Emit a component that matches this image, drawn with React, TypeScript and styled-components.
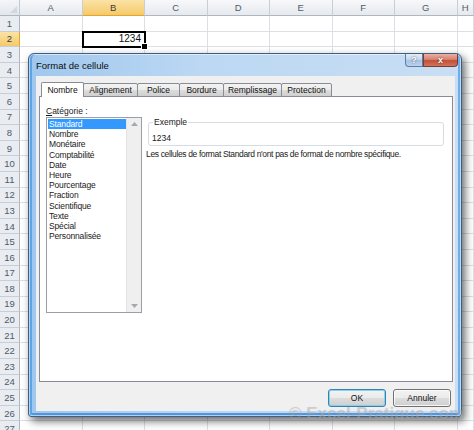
import React from "react";
import styled, { createGlobalStyle, css } from "styled-components";

const GlobalStyle = createGlobalStyle`
  html, body { margin: 0; padding: 0; background: #fff; overflow: hidden; }
  body { font-family: "Liberation Sans", Arial, sans-serif; }
  * { box-sizing: border-box; }
`;

const Stage = styled.div`
  position: relative;
  width: 474px;
  height: 430px;
  overflow: hidden;
  background: #fff;
`;

/* ---------- spreadsheet ---------- */
const Sheet = styled.div`
  display: grid;
  grid-template-columns: 20px repeat(7, 62.5px) 1fr;
  grid-template-rows: 16px repeat(27, 15.6px);
  width: 474px;
  font-family: "Liberation Sans", Arial, sans-serif;
`;

const Corner = styled.div`
  background: linear-gradient(#f4f6f9, #e2e6ec);
  border-right: 1px solid #c2c9d3;
  border-bottom: 1px solid #aeb6c2;
  position: relative;
  &::after {
    content: "";
    position: absolute;
    right: 2px;
    bottom: 2px;
    border-style: solid;
    border-width: 0 0 7px 7px;
    border-color: transparent transparent #d3d8df transparent;
  }
`;

const ColHeader = styled.div<{ $active?: boolean }>`
  display: flex;
  align-items: center;
  justify-content: center;
  font-size: 9.5px;
  color: #505a68;
  border-right: 1px solid #c8ced7;
  border-bottom: 1px solid #aeb6c2;
  background: linear-gradient(#f7f8fa, #e6e9ee);
  ${(p) =>
    p.$active &&
    css`
      background: linear-gradient(#fbe3a6, #f5c969);
      border-bottom: 1px solid #e0a630;
      color: #3b3b3b;
    `}
`;

const RowHeader = styled.div<{ $active?: boolean }>`
  display: flex;
  align-items: center;
  justify-content: center;
  font-size: 9.5px;
  color: #505a68;
  border-right: 1px solid #aeb6c2;
  border-bottom: 1px solid #c8ced7;
  background: #e9ecf1;
  ${(p) =>
    p.$active &&
    css`
      background: linear-gradient(#fbe3a6, #f5c969);
      border-right: 1px solid #e0a630;
      color: #3b3b3b;
    `}
`;

const Cell = styled.div<{ $selected?: boolean }>`
  border-right: 1px solid #dcdfe3;
  border-bottom: 1px solid #dcdfe3;
  font-size: 10px;
  color: #111;
  display: flex;
  align-items: center;
  justify-content: flex-end;
  padding-right: 3px;
  ${(p) =>
    p.$selected &&
    css`
      position: relative;
      z-index: 1;
      outline: 2px solid #000;
      outline-offset: -1px;
      &::after {
        content: "";
        position: absolute;
        right: -4px;
        bottom: -4px;
        width: 5px;
        height: 5px;
        background: #000;
        border: 1px solid #fff;
      }
    `}
`;

/* ---------- dialog ---------- */
const Window = styled.div`
  position: absolute;
  left: 28px;
  top: 53px;
  width: 434px;
  height: 364px;
  display: flex;
  flex-direction: column;
  padding: 0 6px 5px 7px;
  border: 1px solid #3f5e84;
  border-radius: 6px 6px 3px 3px;
  background: linear-gradient(90deg, #9fc7ee 0%, #bcd8f3 40%, #c8def4 100%);
  box-shadow: inset 0 0 0 1px rgba(255, 255, 255, 0.55),
    inset 3px 0 0 #5ea3e4, inset -3px 0 0 #6eaee8, inset 0 -3px 0 #4e97e0,
    3px 4px 8px rgba(0, 0, 0, 0.6);
  font-family: "Liberation Sans", Arial, sans-serif;
  z-index: 5;
`;

const TitleBar = styled.div`
  height: 22px;
  display: flex;
  align-items: center;
  font-size: 9.5px;
  color: #0d0d0d;
  padding-top: 1px;
`;

const CaptionButtons = styled.div`
  position: absolute;
  top: 0;
  right: 3px;
  display: flex;
`;

const CaptionButton = styled.div<{ $close?: boolean }>`
  height: 13px;
  width: ${(p) => (p.$close ? "35px" : "18px")};
  display: flex;
  align-items: center;
  justify-content: center;
  font-size: 9px;
  font-weight: bold;
  color: #fff;
  border: 1px solid ${(p) => (p.$close ? "#7a3b33" : "#5c7ea6")};
  border-top: none;
  border-radius: ${(p) => (p.$close ? "0 0 4px 0" : "0 0 0 4px")};
  text-shadow: 0 0 2px rgba(0, 0, 0, 0.7);
  background: ${(p) =>
    p.$close
      ? "linear-gradient(#eab0a2 0%, #d7826f 45%, #c34f38 55%, #d0745c 100%)"
      : "linear-gradient(#e3eef9 0%, #c3d7ee 45%, #a6c2e3 55%, #bcd3ee 100%)"};
`;

const Client = styled.div`
  flex: 1;
  display: flex;
  flex-direction: column;
  background: #f0f0f0;
  padding: 6px 2px 4px 3px;
`;

const TabStrip = styled.div`
  display: flex;
  align-items: flex-end;
  height: 15px;
  padding-left: 2px;
  margin-bottom: -1px;
  position: relative;
  z-index: 1;
`;

const Tab = styled.div<{ $active?: boolean; $w: number }>`
  width: ${(p) => p.$w}px;
  height: ${(p) => (p.$active ? 15 : 14)}px;
  display: flex;
  align-items: center;
  justify-content: center;
  font-size: 8.5px;
  color: #111;
  border: 1px solid #898c95;
  margin-right: -1px;
  border-radius: 2px 2px 0 0;
  border-bottom: ${(p) => (p.$active ? "none" : "1px solid #898c95")};
  background: ${(p) =>
    p.$active
      ? "#fff"
      : "linear-gradient(#f3f3f3 0%, #ebebeb 50%, #dddddd 50%, #cfcfcf 100%)"};
`;

const Panel = styled.div`
  height: 286px;
  background: #fff;
  border: 1px solid #898c95;
  display: flex;
  gap: 4px;
  padding: 8px 8px 0 6px;
  font-size: 8.5px;
  color: #1a1a1a;
`;

const LeftCol = styled.div`
  display: flex;
  flex-direction: column;
  width: 96px;
`;

const FieldLabel = styled.div`
  height: 12px;
  line-height: 12px;
  u {
    text-decoration: underline;
  }
`;

const ListBox = styled.div`
  height: 196px;
  border: 1px solid #9a9ea6;
  display: flex;
  background: #fff;
`;

const ListItems = styled.ul`
  flex: 1;
  list-style: none;
  margin: 0;
  padding: 1px 0 0 1px;
`;

const ListItem = styled.li<{ $selected?: boolean }>`
  height: 10.2px;
  line-height: 10.2px;
  padding-left: 1px;
  letter-spacing: -0.15px;
  white-space: nowrap;
  ${(p) =>
    p.$selected &&
    css`
      background: #3399ff;
      color: #fff;
    `}
`;

const ScrollBar = styled.div`
  width: 15px;
  background: #efefef;
  border-left: 1px solid #e4e4e4;
  display: flex;
  flex-direction: column;
  justify-content: space-between;
  align-items: center;
  padding: 4px 0;
`;

const RightCol = styled.div`
  flex: 1;
  display: flex;
  flex-direction: column;
`;

const Group = styled.fieldset`
  margin: 12.5px 0 0 2px;
  padding: 0 0 0 3px;
  height: 28.5px;
  border: 1px solid #d5dde3;
  border-radius: 3px;
  legend {
    padding: 0 1px;
    margin-left: 1px;
    font-size: 8.5px;
    line-height: 9px;
  }
`;

const SampleValue = styled.div`
  line-height: 12px;
  margin-top: 5px;
`;

const Description = styled.div`
  margin-top: 2px;
  line-height: 12px;
  letter-spacing: -0.35px;
  white-space: nowrap;
`;

const ButtonRow = styled.div`
  display: flex;
  justify-content: flex-end;
  gap: 7px;
  margin-top: 7px;
  padding-right: 2px;
`;

const PushButton = styled.button<{ $default?: boolean }>`
  width: 58px;
  height: 18px;
  font-family: "Liberation Sans", Arial, sans-serif;
  font-size: 8.5px;
  color: #111;
  padding: 0;
  border-radius: 3px;
  border: 1px solid ${(p) => (p.$default ? "#3c7fb1" : "#707070")};
  background: linear-gradient(#f2f2f2 0%, #ebebeb 50%, #dddddd 50%, #cfcfcf 100%);
  box-shadow: inset 0 0 0 1px
    ${(p) => (p.$default ? "rgba(120, 210, 240, 0.9)" : "rgba(255,255,255,0.8)")};
`;

const Watermark = styled.div`
  position: absolute;
  left: 289px;
  top: 404px;
  font-family: "Liberation Sans", Arial, sans-serif;
  font-size: 17px;
  font-weight: bold;
  white-space: nowrap;
  color: rgba(185, 185, 185, 0.32);
  text-shadow: 0 0 1px rgba(120, 120, 120, 0.22);
  z-index: 10;
  pointer-events: none;
`;

const Arrow = ({ up }: { up?: boolean }) => (
  <svg width="7" height="4" viewBox="0 0 7 4">
    <path d={up ? "M0 4 L3.5 0 L7 4 Z" : "M0 0 L3.5 4 L7 0 Z"} fill="#a8a8a8" />
  </svg>
);

const columns = ["A", "B", "C", "D", "E", "F", "G", "H"];
const categories = [
  "Standard",
  "Nombre",
  "Monétaire",
  "Comptabilité",
  "Date",
  "Heure",
  "Pourcentage",
  "Fraction",
  "Scientifique",
  "Texte",
  "Spécial",
  "Personnalisée",
];
const tabs: { label: string; w: number }[] = [
  { label: "Nombre", w: 43 },
  { label: "Alignement", w: 55 },
  { label: "Police", w: 43 },
  { label: "Bordure", w: 45 },
  { label: "Remplissage", w: 59 },
  { label: "Protection", w: 51 },
];

export default function App() {
  const rows = Array.from({ length: 27 }, (_, i) => i + 1);
  return (
    <Stage>
      <GlobalStyle />
      <Sheet>
        <Corner />
        {columns.map((c) => (
          <ColHeader key={c} $active={c === "B"}>
            {c}
          </ColHeader>
        ))}
        {rows.map((r) => (
          <React.Fragment key={r}>
            <RowHeader $active={r === 2}>{r}</RowHeader>
            {columns.map((c) => (
              <Cell key={c} $selected={r === 2 && c === "B"}>
                {r === 2 && c === "B" ? "1234" : null}
              </Cell>
            ))}
          </React.Fragment>
        ))}
      </Sheet>

      <Window>
        <TitleBar>Format de cellule</TitleBar>
        <CaptionButtons>
          <CaptionButton>?</CaptionButton>
          <CaptionButton $close>x</CaptionButton>
        </CaptionButtons>
        <Client>
          <TabStrip>
            {tabs.map((t, i) => (
              <Tab key={t.label} $w={t.w} $active={i === 0}>
                {t.label}
              </Tab>
            ))}
          </TabStrip>
          <Panel>
            <LeftCol>
              <FieldLabel>
                <u>C</u>atégorie :
              </FieldLabel>
              <ListBox>
                <ListItems>
                  {categories.map((c, i) => (
                    <ListItem key={c} $selected={i === 0}>
                      {c}
                    </ListItem>
                  ))}
                </ListItems>
                <ScrollBar>
                  <Arrow up />
                  <Arrow />
                </ScrollBar>
              </ListBox>
            </LeftCol>
            <RightCol>
              <Group>
                <legend>Exemple</legend>
                <SampleValue>1234</SampleValue>
              </Group>
              <Description>
                Les cellules de format Standard n'ont pas de format de nombre spécifique.
              </Description>
            </RightCol>
          </Panel>
          <ButtonRow>
            <PushButton $default>OK</PushButton>
            <PushButton>Annuler</PushButton>
          </ButtonRow>
        </Client>
      </Window>
      <Watermark>© Excel-Pratique.com</Watermark>
    </Stage>
  );
}
